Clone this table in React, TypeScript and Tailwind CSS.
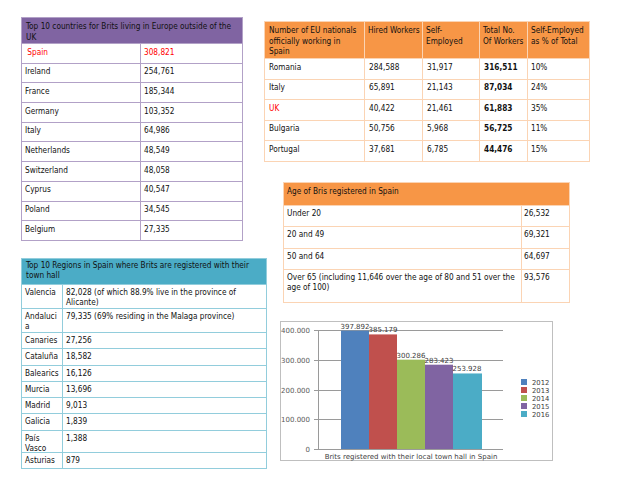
const countries = [
  { name: " Spain", value: "308,821", red: true },
  { name: "Ireland", value: "254,761" },
  { name: "France", value: "185,344" },
  { name: "Germany", value: "103,352" },
  { name: "Italy", value: "64,986" },
  { name: "Netherlands", value: "48,549" },
  { name: "Switzerland", value: "48,058" },
  { name: "Cyprus", value: "40,547" },
  { name: "Poland", value: "34,545" },
  { name: "Belgium", value: "27,335" },
];

const workers = [
  { name: "Romania", hired: "284,588", self: "31,917", total: "316,511", pct: "10%" },
  { name: "Italy", hired: "65,891", self: "21,143", total: "87,034", pct: "24%" },
  { name: "UK", hired: "40,422", self: "21,461", total: "61,883", pct: "35%", red: true },
  { name: "Bulgaria", hired: "50,756", self: "5,968", total: "56,725", pct: "11%" },
  { name: "Portugal", hired: "37,681", self: "6,785", total: "44,476", pct: "15%" },
];

const ages = [
  { label: "Under 20", value: "26,532", h: "h-[21px]" },
  { label: "20 and 49", value: "69,321", h: "h-[22px]" },
  { label: "50 and 64", value: "64,697", h: "h-[21px]" },
  {
    label: "Over 65 (including 11,646 over the age of 80 and 51 over the age of 100)",
    value: "93,576",
    h: "h-[33px]",
  },
];

const regions = [
  { name: "Valencia", value: "82,028 (of which 88.9% live in the province of Alicante)", h: "h-[24px]" },
  { name: "Andaluci\na", value: "79,335 (69% residing in the Malaga province)", h: "h-[24.5px]" },
  { name: "Canaries", value: "27,256", h: "h-[15.7px]" },
  { name: "Cataluña", value: "18,582", h: "h-[16.7px]" },
  { name: "Balearics", value: "16,126", h: "h-[16.7px]" },
  { name: "Murcia", value: "13,696", h: "h-[15.6px]" },
  { name: "Madrid", value: "9,013", h: "h-[16px]" },
  { name: "Galicia", value: "1,839", h: "h-[16.7px]" },
  { name: "País\nVasco", value: "1,388", h: "h-[22.7px]" },
  { name: "Asturias", value: "879", h: "h-[15.6px]" },
];

const bars = [
  { year: "2012", value: 397892, label: "397.892", color: "#4f81bd" },
  { year: "2013", value: 385179, label: "385.179", color: "#c0504d" },
  { year: "2014", value: 300286, label: "300.286", color: "#9bbb59" },
  { year: "2015", value: 283423, label: "283.423", color: "#8064a2" },
  { year: "2016", value: 253928, label: "253.928", color: "#4bacc6" },
];

function CountryTable() {
  return (
    <div className="w-[222px] border border-[#b2a1c7]">
      <div className="h-[25px] bg-[#8064a2] px-[4px] pt-[3px] leading-[10.5px] text-[#111]">
        Top 10 countries for Brits living in Europe outside of the UK
      </div>
      {countries.map((c) => (
        <div
          key={c.name}
          className={`flex h-[19.7px] border-t border-[#b2a1c7] leading-[10.5px] ${c.red ? "text-[#ff0000]" : "text-[#111]"}`}
        >
          <div className="w-[119px] shrink-0 whitespace-pre border-r border-[#b2a1c7] pl-[3px] pt-[2.5px]">
            {c.name}
          </div>
          <div className="pl-[3px] pt-[2.5px]">{c.value}</div>
        </div>
      ))}
    </div>
  );
}

function WorkersTable() {
  const cell = "shrink-0 border-r border-[#fbd4b4] pl-[4px] pt-[2.5px]";
  return (
    <div className="w-[326px] border border-[#fbd4b4] leading-[10.5px] text-[#111]">
      <div className="flex h-[36px] bg-[#f79646]">
        <div className="w-[100px] shrink-0 border-r border-[#fbd4b4] pl-[4px] pt-[3px]">
          Number of EU nationals
          <br />
          officially working in
          <br />
          Spain
        </div>
        <div className="w-[58px] shrink-0 border-r border-[#fbd4b4] pl-[3px] pt-[3px] whitespace-nowrap">
          Hired Workers
        </div>
        <div className="w-[57px] shrink-0 border-r border-[#fbd4b4] pl-[3px] pt-[3px]">
          Self-
          <br />
          Employed
        </div>
        <div className="w-[48px] shrink-0 border-r border-[#fbd4b4] pl-[3px] pt-[3px] whitespace-nowrap">
          Total No.
          <br />
          Of Workers
        </div>
        <div className="pl-[3px] pt-[3px] whitespace-nowrap">
          Self-Employed
          <br />
          as % of Total
        </div>
      </div>
      {workers.map((w) => (
        <div key={w.name} className="flex h-[20.6px] border-t border-[#fbd4b4]">
          <div className={`w-[100px] ${cell} ${w.red ? "text-[#ff0000]" : ""}`}>{w.name}</div>
          <div className={`w-[58px] ${cell}`}>{w.hired}</div>
          <div className={`w-[57px] ${cell}`}>{w.self}</div>
          <div className={`w-[48px] ${cell} font-bold`}>{w.total}</div>
          <div className="pl-[3px] pt-[2.5px]">{w.pct}</div>
        </div>
      ))}
    </div>
  );
}

function AgeTable() {
  return (
    <div className="w-[287px] border border-[#fbd4b4] leading-[10.5px] text-[#111]">
      <div className="h-[22px] bg-[#f79646] pl-[3px] pt-[3px]">Age of Bris registered in Spain</div>
      {ages.map((a) => (
        <div key={a.value} className={`flex ${a.h} border-t border-[#fbd4b4]`}>
          <div className="w-[238px] shrink-0 border-r border-[#fbd4b4] pl-[3px] pr-[4px] pt-[2px]">
            {a.label}
          </div>
          <div className="pl-[2px] pt-[2px]">{a.value}</div>
        </div>
      ))}
    </div>
  );
}

function RegionTable() {
  return (
    <div className="w-[246px] border border-[#92cddc] leading-[10px] text-[#111]">
      <div className="h-[25px] bg-[#4bacc6] pl-[4px] pr-[4px] pt-[1.5px]">
        Top 10 Regions in Spain where Brits are registered with their town hall
      </div>
      {regions.map((r) => (
        <div key={r.name} className={`flex ${r.h} border-t border-[#92cddc]`}>
          <div className="w-[41px] shrink-0 whitespace-pre-line border-r border-[#92cddc] pl-[3px] pt-[2px]">
            {r.name}
          </div>
          <div className="pl-[3px] pr-[4px] pt-[2px]">{r.value}</div>
        </div>
      ))}
    </div>
  );
}

function BritsChart() {
  const base = 127;
  const scale = 119 / 400000;
  const grid = [
    { y: 8, label: "400.000" },
    { y: 38, label: "300.000" },
    { y: 68, label: "200.000" },
    { y: 97, label: "100.000" },
    { y: 127, label: "0" },
  ];
  return (
    <div className="h-[140px] w-[273px] border border-[#bfbfbf]">
      <svg width="271" height="138" className="overflow-visible font-['DejaVu_Sans',sans-serif]">
        {grid.map((g) => (
          <g key={g.label}>
            <line x1="37" x2="222" y1={g.y + 0.5} y2={g.y + 0.5} stroke="#9a9a9a" strokeWidth="1" />
            <line x1="33" x2="37" y1={g.y + 0.5} y2={g.y + 0.5} stroke="#9a9a9a" strokeWidth="1" />
            <text x="29" y={g.y + 3} textAnchor="end" fontSize="7" fill="#595959">
              {g.label}
            </text>
          </g>
        ))}
        <line x1="37.5" x2="37.5" y1="8" y2="127.5" stroke="#9a9a9a" strokeWidth="1" />
        {bars.map((b, i) => {
          const h = b.value * scale;
          const x = 60 + i * 28;
          return (
            <g key={b.year}>
              <rect x={x} y={base - h} width={i === 4 ? 29 : 28} height={h} fill={b.color} />
              <text x={x + 14} y={base - h - 2} textAnchor="middle" fontSize="7" fill="#404040">
                {b.label}
              </text>
            </g>
          );
        })}
        <text x="130" y="137" textAnchor="middle" fontSize="7" fill="#404040">
          Brits registered with their local town hall in Spain
        </text>
        {bars.map((b, i) => (
          <g key={"l" + b.year}>
            <rect x="240" y={57 + i * 8} width="6" height="6" fill={b.color} />
            <text x="251" y={63 + i * 8} fontSize="6.8" fill="#404040">
              {b.year}
            </text>
          </g>
        ))}
      </svg>
    </div>
  );
}

export default function App() {
  return (
    <div className="flex h-[480px] w-[640px] overflow-hidden bg-white font-['DejaVu_Sans_Condensed','Liberation_Sans',Arial,sans-serif] text-[8.2px]">
      <div className="ml-[21px] mt-[17px] flex w-[243px] shrink-0 flex-col">
        <CountryTable />
        <div className="mt-[17px]">
          <RegionTable />
        </div>
      </div>
      <div className="mt-[21px] flex w-[326px] shrink-0 flex-col">
        <WorkersTable />
        <div className="ml-[19px] mt-[20px]">
          <AgeTable />
        </div>
        <div className="ml-[16px] mt-[18px]">
          <BritsChart />
        </div>
      </div>
    </div>
  );
}
